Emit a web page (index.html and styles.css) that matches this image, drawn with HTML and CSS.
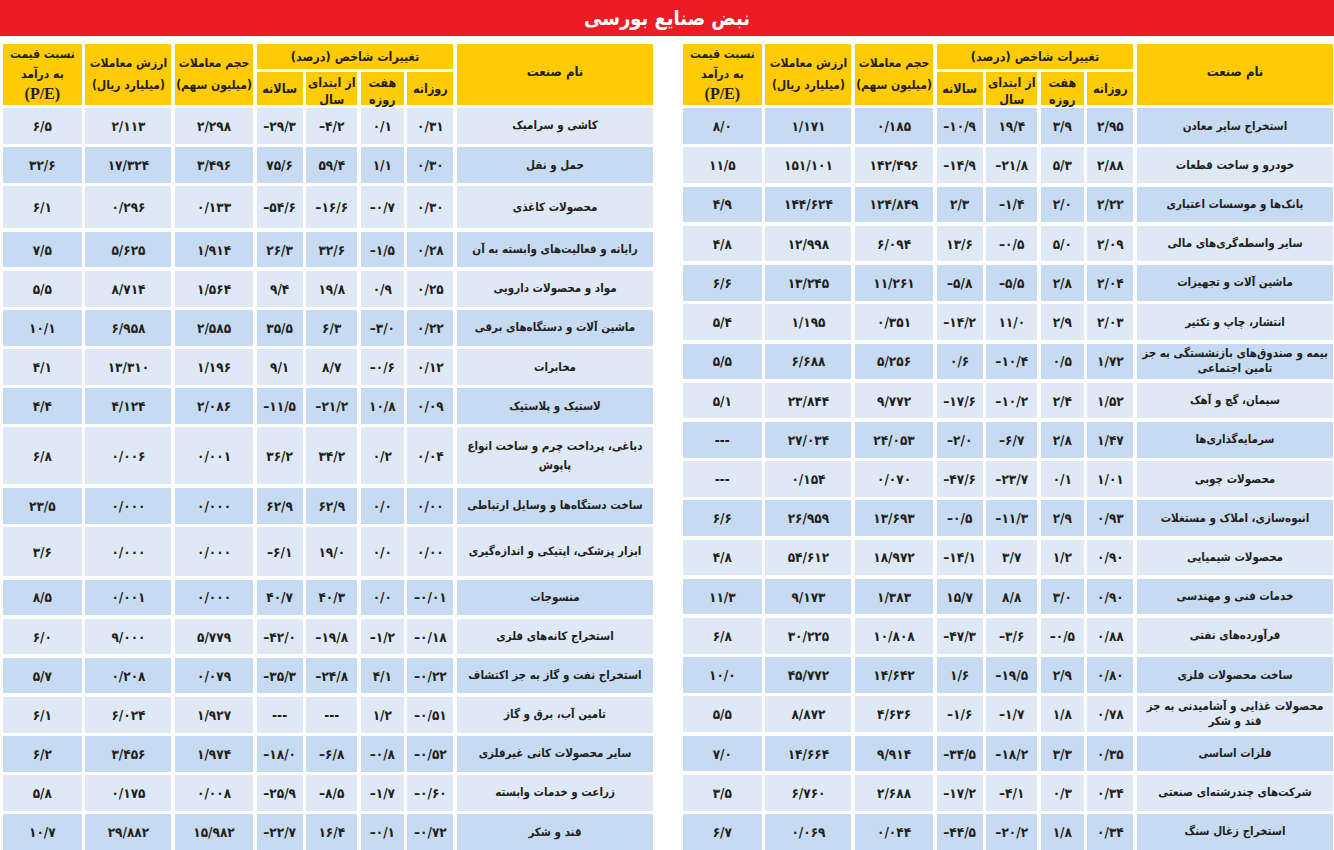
FILE: index.html
```html
<!DOCTYPE html>
<html lang="fa" dir="rtl">
<head>
<meta charset="utf-8">
<title>نبض صنایع بورسی</title>
<link rel="stylesheet" href="styles.css">
</head>
<body>
<header class="banner"><h1 class="banner__title">نبض صنایع بورسی</h1></header>
<main class="boards">
<section class="board board--first">
  <div class="head head--name">نام صنعت</div>
  <div class="head head--group">تغییرات شاخص (درصد)</div>
  <div class="head head--span">حجم معاملات<br>(میلیون سهم)</div>
  <div class="head head--span">ارزش معاملات<br>(میلیارد ریال)</div>
  <div class="head head--span head--pe"><div class="head__text">نسبت قیمت<br>به درآمد<br><span class="latin" dir="ltr">(P/E)</span></div></div>
  <div class="head head--sub">روزانه</div>
  <div class="head head--sub head--two">هفت<br>روزه</div>
  <div class="head head--sub head--two">از ابتدای<br>سال</div>
  <div class="head head--sub">سالانه</div>

  <div class="row row--dark"><div class="cell cell--name">استخراج سایر معادن</div><div class="cell cell--num">۲/۹۵</div><div class="cell cell--num">۳/۹</div><div class="cell cell--num">۱۹/۴</div><div class="cell cell--num">–۱۰/۹</div><div class="cell cell--num">۰/۱۸۵</div><div class="cell cell--num">۱/۱۷۱</div><div class="cell cell--num">۸/۰</div></div>
  <div class="row row--light"><div class="cell cell--name">خودرو و ساخت قطعات</div><div class="cell cell--num">۲/۸۸</div><div class="cell cell--num">۵/۳</div><div class="cell cell--num">–۲۱/۸</div><div class="cell cell--num">–۱۴/۹</div><div class="cell cell--num">۱۴۲/۴۹۶</div><div class="cell cell--num">۱۵۱/۱۰۱</div><div class="cell cell--num">۱۱/۵</div></div>
  <div class="row row--dark"><div class="cell cell--name">بانک‌ها و موسسات اعتباری</div><div class="cell cell--num">۲/۲۲</div><div class="cell cell--num">۲/۰</div><div class="cell cell--num">–۱/۴</div><div class="cell cell--num">۲/۳</div><div class="cell cell--num">۱۲۴/۸۴۹</div><div class="cell cell--num">۱۴۴/۶۲۴</div><div class="cell cell--num">۴/۹</div></div>
  <div class="row row--light"><div class="cell cell--name">سایر واسطه‌گری‌های مالی</div><div class="cell cell--num">۲/۰۹</div><div class="cell cell--num">۵/۰</div><div class="cell cell--num">–۰/۵</div><div class="cell cell--num">۱۳/۶</div><div class="cell cell--num">۶/۰۹۴</div><div class="cell cell--num">۱۲/۹۹۸</div><div class="cell cell--num">۴/۸</div></div>
  <div class="row row--dark"><div class="cell cell--name">ماشین آلات و تجهیزات</div><div class="cell cell--num">۲/۰۴</div><div class="cell cell--num">۲/۸</div><div class="cell cell--num">–۵/۵</div><div class="cell cell--num">–۵/۸</div><div class="cell cell--num">۱۱/۲۶۱</div><div class="cell cell--num">۱۳/۲۴۵</div><div class="cell cell--num">۶/۶</div></div>
  <div class="row row--light"><div class="cell cell--name">انتشار، چاپ و تکثیر</div><div class="cell cell--num">۲/۰۳</div><div class="cell cell--num">۲/۹</div><div class="cell cell--num">۱۱/۰</div><div class="cell cell--num">–۱۴/۲</div><div class="cell cell--num">۰/۳۵۱</div><div class="cell cell--num">۱/۱۹۵</div><div class="cell cell--num">۵/۴</div></div>
  <div class="row row--dark"><div class="cell cell--name cell--tight">بیمه و صندوق‌های بازنشستگی به جز<br>تامین اجتماعی</div><div class="cell cell--num">۱/۷۲</div><div class="cell cell--num">۰/۵</div><div class="cell cell--num">–۱۰/۴</div><div class="cell cell--num">۰/۶</div><div class="cell cell--num">۵/۲۵۶</div><div class="cell cell--num">۶/۶۸۸</div><div class="cell cell--num">۵/۵</div></div>
  <div class="row row--light"><div class="cell cell--name">سیمان، گچ و آهک</div><div class="cell cell--num">۱/۵۲</div><div class="cell cell--num">۲/۴</div><div class="cell cell--num">–۱۰/۲</div><div class="cell cell--num">–۱۷/۶</div><div class="cell cell--num">۹/۷۷۲</div><div class="cell cell--num">۲۳/۸۴۴</div><div class="cell cell--num">۵/۱</div></div>
  <div class="row row--dark"><div class="cell cell--name">سرمایه‌گذاری‌ها</div><div class="cell cell--num">۱/۴۷</div><div class="cell cell--num">۲/۸</div><div class="cell cell--num">–۶/۷</div><div class="cell cell--num">–۲/۰</div><div class="cell cell--num">۲۴/۰۵۳</div><div class="cell cell--num">۲۷/۰۳۴</div><div class="cell cell--num">---</div></div>
  <div class="row row--light"><div class="cell cell--name">محصولات چوبی</div><div class="cell cell--num">۱/۰۱</div><div class="cell cell--num">۰/۱</div><div class="cell cell--num">–۲۳/۷</div><div class="cell cell--num">–۴۷/۶</div><div class="cell cell--num">۰/۰۷۰</div><div class="cell cell--num">۰/۱۵۴</div><div class="cell cell--num">---</div></div>
  <div class="row row--dark"><div class="cell cell--name">انبوه‌سازی، املاک و مستغلات</div><div class="cell cell--num">۰/۹۳</div><div class="cell cell--num">۲/۹</div><div class="cell cell--num">–۱۱/۳</div><div class="cell cell--num">–۰/۵</div><div class="cell cell--num">۱۳/۶۹۳</div><div class="cell cell--num">۲۶/۹۵۹</div><div class="cell cell--num">۶/۶</div></div>
  <div class="row row--light"><div class="cell cell--name">محصولات شیمیایی</div><div class="cell cell--num">۰/۹۰</div><div class="cell cell--num">۱/۲</div><div class="cell cell--num">۳/۷</div><div class="cell cell--num">–۱۴/۱</div><div class="cell cell--num">۱۸/۹۷۲</div><div class="cell cell--num">۵۴/۶۱۲</div><div class="cell cell--num">۴/۸</div></div>
  <div class="row row--dark"><div class="cell cell--name">خدمات فنی و مهندسی</div><div class="cell cell--num">۰/۹۰</div><div class="cell cell--num">۳/۰</div><div class="cell cell--num">۸/۸</div><div class="cell cell--num">۱۵/۷</div><div class="cell cell--num">۱/۳۸۳</div><div class="cell cell--num">۹/۱۷۳</div><div class="cell cell--num">۱۱/۳</div></div>
  <div class="row row--light"><div class="cell cell--name">فرآورده‌های نفتی</div><div class="cell cell--num">۰/۸۸</div><div class="cell cell--num">–۰/۵</div><div class="cell cell--num">–۳/۶</div><div class="cell cell--num">–۴۷/۳</div><div class="cell cell--num">۱۰/۸۰۸</div><div class="cell cell--num">۳۰/۲۲۵</div><div class="cell cell--num">۶/۸</div></div>
  <div class="row row--dark"><div class="cell cell--name">ساخت محصولات فلزی</div><div class="cell cell--num">۰/۸۰</div><div class="cell cell--num">۲/۹</div><div class="cell cell--num">–۱۹/۵</div><div class="cell cell--num">۱/۶</div><div class="cell cell--num">۱۴/۶۴۲</div><div class="cell cell--num">۴۵/۷۷۲</div><div class="cell cell--num">۱۰/۰</div></div>
  <div class="row row--light"><div class="cell cell--name cell--tight">محصولات غذایی و آشامیدنی به جز<br>قند و شکر</div><div class="cell cell--num">۰/۷۸</div><div class="cell cell--num">۱/۸</div><div class="cell cell--num">–۱/۷</div><div class="cell cell--num">–۱/۶</div><div class="cell cell--num">۴/۶۳۶</div><div class="cell cell--num">۸/۸۷۲</div><div class="cell cell--num">۵/۵</div></div>
  <div class="row row--dark"><div class="cell cell--name">فلزات اساسی</div><div class="cell cell--num">۰/۳۵</div><div class="cell cell--num">۳/۳</div><div class="cell cell--num">–۱۸/۲</div><div class="cell cell--num">–۳۴/۵</div><div class="cell cell--num">۹/۹۱۴</div><div class="cell cell--num">۱۴/۶۶۴</div><div class="cell cell--num">۷/۰</div></div>
  <div class="row row--light"><div class="cell cell--name">شرکت‌های چندرشته‌ای صنعتی</div><div class="cell cell--num">۰/۳۴</div><div class="cell cell--num">۰/۳</div><div class="cell cell--num">–۴/۱</div><div class="cell cell--num">–۱۷/۲</div><div class="cell cell--num">۲/۶۸۸</div><div class="cell cell--num">۶/۷۶۰</div><div class="cell cell--num">۳/۵</div></div>
  <div class="row row--dark"><div class="cell cell--name">استخراج زغال سنگ</div><div class="cell cell--num">۰/۳۴</div><div class="cell cell--num">۱/۸</div><div class="cell cell--num">–۲۰/۲</div><div class="cell cell--num">–۴۴/۵</div><div class="cell cell--num">۰/۰۴۴</div><div class="cell cell--num">۰/۰۶۹</div><div class="cell cell--num">۶/۷</div></div>
</section>

<section class="board">
  <div class="head head--name">نام صنعت</div>
  <div class="head head--group">تغییرات شاخص (درصد)</div>
  <div class="head head--span">حجم معاملات<br>(میلیون سهم)</div>
  <div class="head head--span">ارزش معاملات<br>(میلیارد ریال)</div>
  <div class="head head--span head--pe"><div class="head__text">نسبت قیمت<br>به درآمد<br><span class="latin" dir="ltr">(P/E)</span></div></div>
  <div class="head head--sub">روزانه</div>
  <div class="head head--sub head--two">هفت<br>روزه</div>
  <div class="head head--sub head--two">از ابتدای<br>سال</div>
  <div class="head head--sub">سالانه</div>

  <div class="row row--light"><div class="cell cell--name">کاشی و سرامیک</div><div class="cell cell--num">۰/۳۱</div><div class="cell cell--num">۰/۱</div><div class="cell cell--num">–۴/۲</div><div class="cell cell--num">–۲۹/۳</div><div class="cell cell--num">۲/۲۹۸</div><div class="cell cell--num">۲/۱۱۳</div><div class="cell cell--num">۶/۵</div></div>
  <div class="row row--dark"><div class="cell cell--name">حمل و نقل</div><div class="cell cell--num">۰/۳۰</div><div class="cell cell--num">۱/۱</div><div class="cell cell--num">۵۹/۴</div><div class="cell cell--num">۷۵/۶</div><div class="cell cell--num">۳/۴۹۶</div><div class="cell cell--num">۱۷/۳۲۴</div><div class="cell cell--num">۳۲/۶</div></div>
  <div class="row row--light row--h42"><div class="cell cell--name">محصولات کاغذی</div><div class="cell cell--num">۰/۳۰</div><div class="cell cell--num">–۰/۷</div><div class="cell cell--num">–۱۶/۶</div><div class="cell cell--num">–۵۴/۶</div><div class="cell cell--num">۰/۱۳۳</div><div class="cell cell--num">۰/۲۹۶</div><div class="cell cell--num">۶/۱</div></div>
  <div class="row row--dark"><div class="cell cell--name">رایانه و فعالیت‌های وابسته به آن</div><div class="cell cell--num">۰/۲۸</div><div class="cell cell--num">–۱/۵</div><div class="cell cell--num">۳۲/۶</div><div class="cell cell--num">۲۶/۳</div><div class="cell cell--num">۱/۹۱۴</div><div class="cell cell--num">۵/۶۲۵</div><div class="cell cell--num">۷/۵</div></div>
  <div class="row row--light"><div class="cell cell--name">مواد و محصولات دارویی</div><div class="cell cell--num">۰/۲۵</div><div class="cell cell--num">۰/۹</div><div class="cell cell--num">۱۹/۸</div><div class="cell cell--num">۹/۴</div><div class="cell cell--num">۱/۵۶۴</div><div class="cell cell--num">۸/۷۱۴</div><div class="cell cell--num">۵/۵</div></div>
  <div class="row row--dark"><div class="cell cell--name">ماشین آلات و دستگاه‌های برقی</div><div class="cell cell--num">۰/۲۲</div><div class="cell cell--num">–۳/۰</div><div class="cell cell--num">۶/۳</div><div class="cell cell--num">۳۵/۵</div><div class="cell cell--num">۲/۵۸۵</div><div class="cell cell--num">۶/۹۵۸</div><div class="cell cell--num">۱۰/۱</div></div>
  <div class="row row--light"><div class="cell cell--name">مخابرات</div><div class="cell cell--num">۰/۱۲</div><div class="cell cell--num">–۰/۶</div><div class="cell cell--num">۸/۷</div><div class="cell cell--num">۹/۱</div><div class="cell cell--num">۱/۱۹۶</div><div class="cell cell--num">۱۳/۳۱۰</div><div class="cell cell--num">۴/۱</div></div>
  <div class="row row--dark"><div class="cell cell--name">لاستیک و پلاستیک</div><div class="cell cell--num">۰/۰۹</div><div class="cell cell--num">۱۰/۸</div><div class="cell cell--num">–۲۱/۲</div><div class="cell cell--num">–۱۱/۵</div><div class="cell cell--num">۲/۰۸۶</div><div class="cell cell--num">۴/۱۲۴</div><div class="cell cell--num">۴/۴</div></div>
  <div class="row row--light row--h57"><div class="cell cell--name cell--loose">دباغی، پرداخت چرم و ساخت انواع<br>پاپوش</div><div class="cell cell--num">۰/۰۴</div><div class="cell cell--num">۰/۲</div><div class="cell cell--num">۳۴/۲</div><div class="cell cell--num">۳۶/۲</div><div class="cell cell--num">۰/۰۰۱</div><div class="cell cell--num">۰/۰۰۶</div><div class="cell cell--num">۶/۸</div></div>
  <div class="row row--dark"><div class="cell cell--name">ساخت دستگاه‌ها و وسایل ارتباطی</div><div class="cell cell--num">۰/۰۰</div><div class="cell cell--num">۰/۰</div><div class="cell cell--num">۶۲/۹</div><div class="cell cell--num">۶۲/۹</div><div class="cell cell--num">۰/۰۰۰</div><div class="cell cell--num">۰/۰۰۰</div><div class="cell cell--num">۲۳/۵</div></div>
  <div class="row row--light row--h49"><div class="cell cell--name">ابزار پزشکی، اپتیکی و اندازه‌گیری</div><div class="cell cell--num">۰/۰۰</div><div class="cell cell--num">۰/۰</div><div class="cell cell--num">۱۹/۰</div><div class="cell cell--num">–۶/۱</div><div class="cell cell--num">۰/۰۰۰</div><div class="cell cell--num">۰/۰۰۰</div><div class="cell cell--num">۳/۶</div></div>
  <div class="row row--dark"><div class="cell cell--name">منسوجات</div><div class="cell cell--num">–۰/۰۱</div><div class="cell cell--num">۰/۰</div><div class="cell cell--num">۴۰/۳</div><div class="cell cell--num">۴۰/۷</div><div class="cell cell--num">۰/۰۰۰</div><div class="cell cell--num">۰/۰۰۱</div><div class="cell cell--num">۸/۵</div></div>
  <div class="row row--light"><div class="cell cell--name">استخراج کانه‌های فلزی</div><div class="cell cell--num">–۰/۱۸</div><div class="cell cell--num">–۱/۲</div><div class="cell cell--num">–۱۹/۸</div><div class="cell cell--num">–۴۲/۰</div><div class="cell cell--num">۵/۷۷۹</div><div class="cell cell--num">۹/۰۰۰</div><div class="cell cell--num">۶/۰</div></div>
  <div class="row row--dark"><div class="cell cell--name">استخراج نفت و گاز به جز اکتشاف</div><div class="cell cell--num">–۰/۲۲</div><div class="cell cell--num">۴/۱</div><div class="cell cell--num">–۲۴/۸</div><div class="cell cell--num">–۳۵/۳</div><div class="cell cell--num">۰/۰۷۹</div><div class="cell cell--num">۰/۲۰۸</div><div class="cell cell--num">۵/۷</div></div>
  <div class="row row--light"><div class="cell cell--name">تامین آب، برق و گاز</div><div class="cell cell--num">–۰/۵۱</div><div class="cell cell--num">۱/۲</div><div class="cell cell--num">---</div><div class="cell cell--num">---</div><div class="cell cell--num">۱/۹۲۷</div><div class="cell cell--num">۶/۰۲۴</div><div class="cell cell--num">۶/۱</div></div>
  <div class="row row--dark"><div class="cell cell--name">سایر محصولات کانی غیرفلزی</div><div class="cell cell--num">–۰/۵۲</div><div class="cell cell--num">–۰/۸</div><div class="cell cell--num">–۶/۸</div><div class="cell cell--num">–۱۸/۰</div><div class="cell cell--num">۱/۹۷۴</div><div class="cell cell--num">۳/۴۵۶</div><div class="cell cell--num">۶/۲</div></div>
  <div class="row row--light"><div class="cell cell--name">زراعت و خدمات وابسته</div><div class="cell cell--num">–۰/۶۰</div><div class="cell cell--num">–۱/۷</div><div class="cell cell--num">–۸/۵</div><div class="cell cell--num">–۲۵/۹</div><div class="cell cell--num">۰/۰۰۸</div><div class="cell cell--num">۰/۱۷۵</div><div class="cell cell--num">۵/۸</div></div>
  <div class="row row--dark"><div class="cell cell--name">قند و شکر</div><div class="cell cell--num">–۰/۷۲</div><div class="cell cell--num">–۰/۱</div><div class="cell cell--num">۱۶/۴</div><div class="cell cell--num">–۲۲/۷</div><div class="cell cell--num">۱۵/۹۸۲</div><div class="cell cell--num">۲۹/۸۸۲</div><div class="cell cell--num">۱۰/۷</div></div>
</section>
</main>
</body>
</html>
```

FILE: styles.css
```css
* { box-sizing: border-box; }

html, body {
  margin: 0;
  padding: 0;
  background: #ffffff;
  overflow: hidden;
}

body {
  font-family: "DejaVu Sans Condensed", "DejaVu Sans", sans-serif;
  color: #231f20;
  direction: rtl;
}

.banner {
  height: 36px;
  background: #ed1c24;
  display: flex;
  align-items: center;
  justify-content: center;
}

.banner__title {
  margin: 0;
  color: #ffffff;
  font-size: 20px;
  font-weight: bold;
  line-height: 1;
}

.boards {
  display: flex;
  gap: 30px;
  padding: 7.5px 1px 0 3px;
}

.board {
  flex: none;
  width: 650px;
  display: grid;
  grid-template-columns: 196px 46px 43px 51px 46px 78px 86px 79px;
  grid-template-rows: 25px 32.5px;
  grid-auto-rows: minmax(35.5px, auto);
  gap: 3.6px;
}

.head {
  background: #ffcb05;
  font-weight: bold;
  font-size: 12.5px;
  display: flex;
  align-items: center;
  justify-content: center;
  text-align: center;
  line-height: 1.2;
  white-space: nowrap;
}

.head--name { grid-row: span 2; padding-bottom: 4px; font-size: 13px; }
.head--group { grid-column: span 4; }
.head--span { grid-row: span 2; line-height: 22px; font-size: 12px; }
.head--pe { line-height: 20px; }
.head__text { text-align: center; }
.head--sub { line-height: 17px; }
.head--two { padding-top: 6px; }

.latin {
  font-family: "Liberation Serif", serif;
  font-size: 16px;
  font-weight: bold;
}

.row { display: contents; }

.cell {
  display: flex;
  align-items: center;
  justify-content: center;
  text-align: center;
  font-weight: bold;
}

.row--light .cell { background: #dfe9f5; }
.row--dark .cell { background: #c6dbf1; }

.row--h42 .cell { min-height: 42px; }
.row--h49 .cell { min-height: 49px; }
.row--h57 .cell { min-height: 57px; }

.cell--name {
  font-size: 11.5px;
  line-height: 1.3;
  padding: 0 3px;
  white-space: nowrap;
}

.cell--tight { line-height: 15px; }
.cell--loose { line-height: 19px; }

.cell--num {
  direction: ltr;
  font-size: 13.5px;
}
```
